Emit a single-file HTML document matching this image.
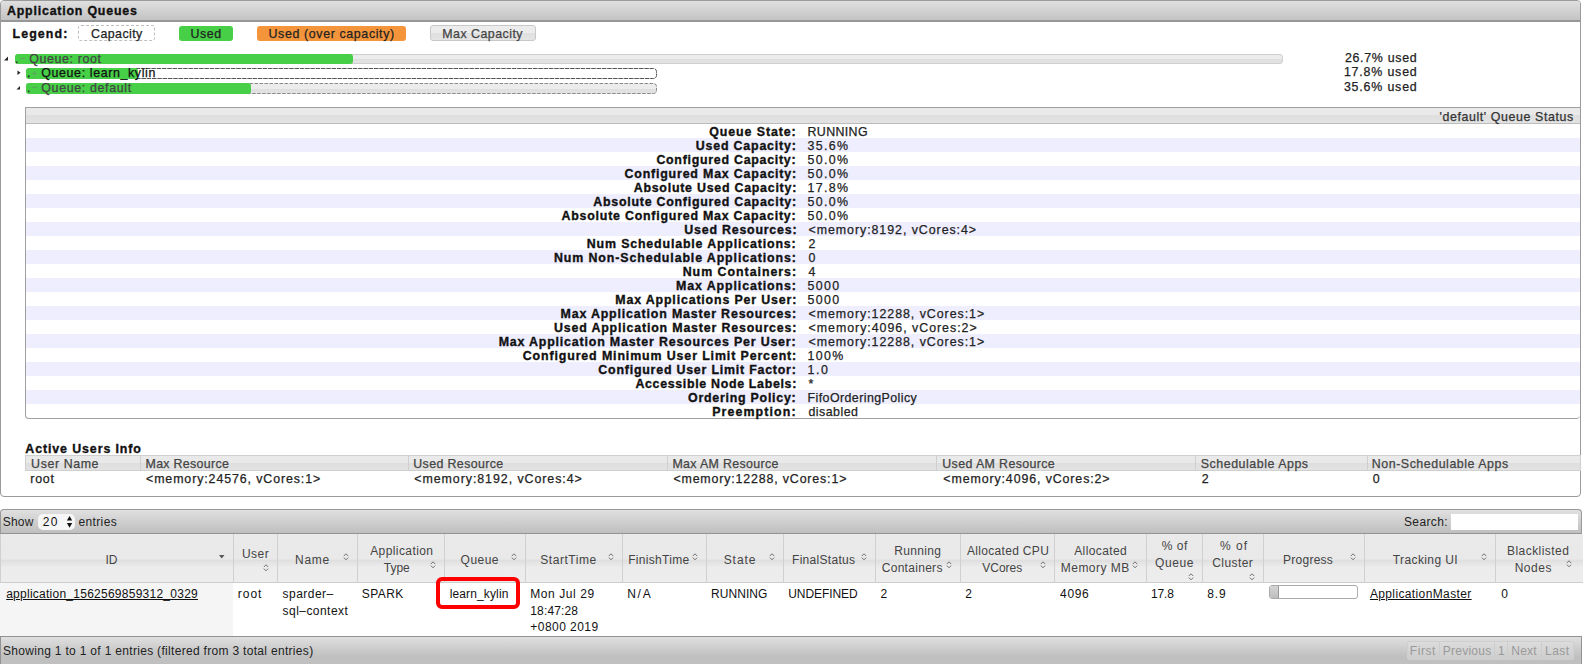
<!DOCTYPE html><html><head><meta charset="utf-8"><style>
*{box-sizing:border-box;margin:0;padding:0}
html,body{width:1583px;height:664px;overflow:hidden;background:#fff}
body{font-family:"Liberation Sans",sans-serif;font-size:12px;color:#222;position:relative}
.a{position:absolute;white-space:nowrap}
#p1{position:absolute;left:0;top:0;width:1581px;height:497px;border:1px solid #9a9a9a;border-radius:4px;overflow:hidden}
#h1{position:absolute;left:0;top:0;width:100%;height:21px;background:linear-gradient(#e0e0e0,#c3c3c3);border-bottom:2px solid #979797}
.leg{position:absolute;top:25px;height:16px;border-radius:3px}
.qst{position:absolute;left:25px;top:107px;width:1555px;height:312px;border:1px solid #a0a0a0;border-right:0;border-radius:0 0 4px 4px;overflow:hidden}
.qsh{position:absolute;left:0;top:0;width:100%;height:16px;background:linear-gradient(#e9e9e9 0,#e9e9e9 50%,#dedede 50%,#e3e3e3 100%);border-bottom:1px solid #bcbcbc}
.row{position:absolute;left:0;width:100%;height:14px}
.o{background:#eeeeff}
.ut{position:absolute;left:25px;top:455px;width:1556px;height:16px;background:linear-gradient(#e9e9e9 0,#e9e9e9 50%,#dedede 50%,#e3e3e3 100%);border:1px solid #cfcfcf}
.ud{position:absolute;top:0;height:14px;border-left:1px solid #cfcfcf}
#p2{position:absolute;left:0;top:509px;width:1582px;height:160px;}
.tb{position:absolute;left:0;top:0;width:1582px;height:25px;border:1px solid #999;border-bottom-color:#939393;border-radius:4px 4px 0 0;background:linear-gradient(#e0e0e0,#bfbfbf)}
.th{position:absolute;top:25px;height:49px;background:linear-gradient(#eaeaea 0,#e9e9e9 52%,#dfdfdf 55%,#e6e6e6 62%,#ececec 70%,#ededed 100%);border-left:1px solid #d0d0d0;border-bottom:1px solid #cdcdcd}
.ft{position:absolute;left:0;top:127px;width:1582px;height:30px;border:1px solid #939393;background:linear-gradient(#dfdfdf,#c0c0c0 70%,#c0c0c0)}
</style></head><body><div id="p1"><div id="h1"></div></div><span class="a" style="top:5px;font-size:12.4px;line-height:12.4px;color:#111;font-weight:bold;-webkit-text-stroke:0.35px #111;letter-spacing:0.794px;left:7px;">Application Queues</span><span class="a" style="top:28px;font-size:12.4px;line-height:12.4px;color:#111;font-weight:bold;-webkit-text-stroke:0.35px #111;letter-spacing:1.083px;left:12.6px;">Legend:</span><div class="leg" style="left:78px;width:77px;border:1px dashed #bfbfbf"></div><span class="a" style="top:28px;font-size:12.4px;line-height:12.4px;color:#222;-webkit-text-stroke:0.25px #222;letter-spacing:0.429px;left:91.1px;">Capacity</span><div class="leg" style="left:179px;top:26px;height:15px;width:54px;background:#47cf48"></div><span class="a" style="top:28px;font-size:12.4px;line-height:12.4px;color:#222;-webkit-text-stroke:0.25px #222;letter-spacing:0.567px;left:190.5px;">Used</span><div class="leg" style="left:257px;top:26px;height:15px;width:149px;background:#f5953b"></div><span class="a" style="top:28px;font-size:12.4px;line-height:12.4px;color:#222;-webkit-text-stroke:0.25px #222;letter-spacing:0.632px;left:268.5px;">Used (over capacity)</span><div class="leg" style="left:430px;width:106px;background:linear-gradient(#ececec 0,#ececec 50%,#e0e0e0 50%,#e4e4e4);border:1px solid #c8c8c8"></div><span class="a" style="top:28px;font-size:12.4px;line-height:12.4px;color:#444;-webkit-text-stroke:0.25px #444;letter-spacing:0.473px;left:442.3px;">Max Capacity</span><div class="a" style="left:15px;top:54px;width:1268px;height:10px;border-radius:3px;background:linear-gradient(#ececec 0,#ececec 50%,#dedede 50%,#e4e4e4);border:1px solid #cfcfcf;"></div><div class="a" style="left:15px;top:54px;width:338px;height:10px;border-radius:3px;background:#47cf48;"></div><div class="a" style="left:26px;top:83px;width:631px;height:11px;border-radius:3px;background:linear-gradient(#ececec 0,#ececec 50%,#dedede 50%,#e4e4e4)"></div><svg class="a" style="left:26px;top:68px" width="632" height="27"><rect x="0.5" y="0.5" width="630" height="10" rx="3" fill="#fff" stroke="#555" stroke-dasharray="4.5 0.8"/><rect x="0.5" y="15.5" width="630" height="10" rx="3" fill="none" stroke="#8a8a8a" stroke-dasharray="3.5 1.5"/></svg><div class="a" style="left:26px;top:68px;width:112px;height:11px;border-radius:3px;background:#47cf48;"></div><div class="a" style="left:26px;top:83px;width:225px;height:11px;border-radius:3px;background:#47cf48;"></div><svg class="a" style="left:0;top:50px" width="30" height="45"><path d="M4 10.5 L8 6.5 L8 10.5 Z" fill="#222"/><path d="M17.5 20.5 L20.5 22.8 L17.5 25 Z" fill="#222"/><path d="M16.5 39.5 L20 36 L20 39.5 Z" fill="#222"/></svg><span class="a" style="top:53px;font-size:12.4px;line-height:12.4px;color:#333;-webkit-text-stroke:0.25px #333;left:15px;">.</span><div class="a" style="left:20px;top:58px;width:5px;height:1px;background:#5aa65a"></div><span class="a" style="top:53px;font-size:12.4px;line-height:12.4px;color:#444;-webkit-text-stroke:0.25px #444;letter-spacing:0.63px;left:29.2px;">Queue: root</span><span class="a" style="top:67px;font-size:12.4px;line-height:12.4px;color:#111;-webkit-text-stroke:0.25px #111;left:27px;">.</span><div class="a" style="left:31.5px;top:73px;width:5px;height:1px;background:#5aa65a"></div><div class="a" style="left:33.5px;top:71px;width:1px;height:5px;background:#5aa65a"></div><span class="a" style="top:67px;font-size:12.4px;line-height:12.4px;color:#111;-webkit-text-stroke:0.25px #111;letter-spacing:0.629px;left:41.3px;">Queue: learn_kylin</span><span class="a" style="top:82px;font-size:12.4px;line-height:12.4px;color:#333;-webkit-text-stroke:0.25px #333;left:27px;">.</span><div class="a" style="left:32px;top:87px;width:5px;height:1px;background:#5aa65a"></div><span class="a" style="top:82px;font-size:12.4px;line-height:12.4px;color:#444;-webkit-text-stroke:0.25px #444;letter-spacing:0.654px;left:41.3px;">Queue: default</span><span class="a" style="top:52px;font-size:12.4px;line-height:12.4px;color:#222;-webkit-text-stroke:0.25px #222;letter-spacing:0.711px;left:1344.9px;">26.7% used</span><span class="a" style="top:66px;font-size:12.4px;line-height:12.4px;color:#222;-webkit-text-stroke:0.25px #222;letter-spacing:0.822px;left:1343.9px;">17.8% used</span><span class="a" style="top:81px;font-size:12.4px;line-height:12.4px;color:#222;-webkit-text-stroke:0.25px #222;letter-spacing:0.822px;left:1343.9px;">35.6% used</span><div class="qst"><div class="qsh"></div><div class="row" style="top:16px"></div><div class="row o" style="top:30px"></div><div class="row" style="top:44px"></div><div class="row o" style="top:58px"></div><div class="row" style="top:72px"></div><div class="row o" style="top:86px"></div><div class="row" style="top:100px"></div><div class="row o" style="top:114px"></div><div class="row" style="top:128px"></div><div class="row o" style="top:142px"></div><div class="row" style="top:156px"></div><div class="row o" style="top:170px"></div><div class="row" style="top:184px"></div><div class="row o" style="top:198px"></div><div class="row" style="top:212px"></div><div class="row o" style="top:226px"></div><div class="row" style="top:240px"></div><div class="row o" style="top:254px"></div><div class="row" style="top:268px"></div><div class="row o" style="top:282px"></div><div class="row" style="top:296px"></div></div><span class="a" style="top:111px;font-size:12.4px;line-height:12.4px;color:#333;-webkit-text-stroke:0.25px #333;letter-spacing:0.595px;left:1439.5px;">&#x27;default&#x27; Queue Status</span><span class="a" style="top:126px;font-size:12.4px;line-height:12.4px;color:#111;font-weight:bold;-webkit-text-stroke:0.35px #111;letter-spacing:0.918px;left:709.2px;">Queue State:</span><span class="a" style="top:126px;font-size:12.4px;line-height:12.4px;color:#222;-webkit-text-stroke:0.25px #222;letter-spacing:0.367px;left:807.5px;">RUNNING</span><span class="a" style="top:140px;font-size:12.4px;line-height:12.4px;color:#111;font-weight:bold;-webkit-text-stroke:0.35px #111;letter-spacing:0.808px;left:695.8px;">Used Capacity:</span><span class="a" style="top:140px;font-size:12.4px;line-height:12.4px;color:#222;-webkit-text-stroke:0.25px #222;letter-spacing:1.375px;left:807.5px;">35.6%</span><span class="a" style="top:154px;font-size:12.4px;line-height:12.4px;color:#111;font-weight:bold;-webkit-text-stroke:0.35px #111;letter-spacing:0.732px;left:656.4px;">Configured Capacity:</span><span class="a" style="top:154px;font-size:12.4px;line-height:12.4px;color:#222;-webkit-text-stroke:0.25px #222;letter-spacing:1.375px;left:807.5px;">50.0%</span><span class="a" style="top:168px;font-size:12.4px;line-height:12.4px;color:#111;font-weight:bold;-webkit-text-stroke:0.35px #111;letter-spacing:0.817px;left:624.5px;">Configured Max Capacity:</span><span class="a" style="top:168px;font-size:12.4px;line-height:12.4px;color:#222;-webkit-text-stroke:0.25px #222;letter-spacing:1.375px;left:807.5px;">50.0%</span><span class="a" style="top:182px;font-size:12.4px;line-height:12.4px;color:#111;font-weight:bold;-webkit-text-stroke:0.35px #111;letter-spacing:0.755px;left:633.7px;">Absolute Used Capacity:</span><span class="a" style="top:182px;font-size:12.4px;line-height:12.4px;color:#222;-webkit-text-stroke:0.25px #222;letter-spacing:1.375px;left:807.5px;">17.8%</span><span class="a" style="top:196px;font-size:12.4px;line-height:12.4px;color:#111;font-weight:bold;-webkit-text-stroke:0.35px #111;letter-spacing:0.75px;left:593.3px;">Absolute Configured Capacity:</span><span class="a" style="top:196px;font-size:12.4px;line-height:12.4px;color:#222;-webkit-text-stroke:0.25px #222;letter-spacing:1.375px;left:807.5px;">50.0%</span><span class="a" style="top:210px;font-size:12.4px;line-height:12.4px;color:#111;font-weight:bold;-webkit-text-stroke:0.35px #111;letter-spacing:0.775px;left:561.5px;">Absolute Configured Max Capacity:</span><span class="a" style="top:210px;font-size:12.4px;line-height:12.4px;color:#222;-webkit-text-stroke:0.25px #222;letter-spacing:1.375px;left:807.5px;">50.0%</span><span class="a" style="top:224px;font-size:12.4px;line-height:12.4px;color:#111;font-weight:bold;-webkit-text-stroke:0.35px #111;letter-spacing:0.786px;left:684.3px;">Used Resources:</span><span class="a" style="top:224px;font-size:12.4px;line-height:12.4px;color:#222;-webkit-text-stroke:0.25px #222;letter-spacing:0.95px;left:808.5px;">&lt;memory:8192, vCores:4&gt;</span><span class="a" style="top:238px;font-size:12.4px;line-height:12.4px;color:#111;font-weight:bold;-webkit-text-stroke:0.35px #111;letter-spacing:0.839px;left:586.8px;">Num Schedulable Applications:</span><span class="a" style="top:238px;font-size:12.4px;line-height:12.4px;color:#222;-webkit-text-stroke:0.25px #222;left:808.5px;">2</span><span class="a" style="top:252px;font-size:12.4px;line-height:12.4px;color:#111;font-weight:bold;-webkit-text-stroke:0.35px #111;letter-spacing:0.884px;left:554.0px;">Num Non-Schedulable Applications:</span><span class="a" style="top:252px;font-size:12.4px;line-height:12.4px;color:#222;-webkit-text-stroke:0.25px #222;left:808.5px;">0</span><span class="a" style="top:266px;font-size:12.4px;line-height:12.4px;color:#111;font-weight:bold;-webkit-text-stroke:0.35px #111;letter-spacing:0.971px;left:682.7px;">Num Containers:</span><span class="a" style="top:266px;font-size:12.4px;line-height:12.4px;color:#222;-webkit-text-stroke:0.25px #222;left:808.5px;">4</span><span class="a" style="top:280px;font-size:12.4px;line-height:12.4px;color:#111;font-weight:bold;-webkit-text-stroke:0.35px #111;letter-spacing:0.887px;left:676.1px;">Max Applications:</span><span class="a" style="top:280px;font-size:12.4px;line-height:12.4px;color:#222;-webkit-text-stroke:0.25px #222;letter-spacing:1.4px;left:807.5px;">5000</span><span class="a" style="top:294px;font-size:12.4px;line-height:12.4px;color:#111;font-weight:bold;-webkit-text-stroke:0.35px #111;letter-spacing:0.84px;left:615.3px;">Max Applications Per User:</span><span class="a" style="top:294px;font-size:12.4px;line-height:12.4px;color:#222;-webkit-text-stroke:0.25px #222;letter-spacing:1.4px;left:807.5px;">5000</span><span class="a" style="top:308px;font-size:12.4px;line-height:12.4px;color:#111;font-weight:bold;-webkit-text-stroke:0.35px #111;letter-spacing:0.837px;left:560.5px;">Max Application Master Resources:</span><span class="a" style="top:308px;font-size:12.4px;line-height:12.4px;color:#222;-webkit-text-stroke:0.25px #222;letter-spacing:0.961px;left:808.5px;">&lt;memory:12288, vCores:1&gt;</span><span class="a" style="top:322px;font-size:12.4px;line-height:12.4px;color:#111;font-weight:bold;-webkit-text-stroke:0.35px #111;letter-spacing:0.827px;left:554.0px;">Used Application Master Resources:</span><span class="a" style="top:322px;font-size:12.4px;line-height:12.4px;color:#222;-webkit-text-stroke:0.25px #222;letter-spacing:0.977px;left:808.5px;">&lt;memory:4096, vCores:2&gt;</span><span class="a" style="top:336px;font-size:12.4px;line-height:12.4px;color:#111;font-weight:bold;-webkit-text-stroke:0.35px #111;letter-spacing:0.82px;left:498.7px;">Max Application Master Resources Per User:</span><span class="a" style="top:336px;font-size:12.4px;line-height:12.4px;color:#222;-webkit-text-stroke:0.25px #222;letter-spacing:0.961px;left:808.5px;">&lt;memory:12288, vCores:1&gt;</span><span class="a" style="top:350px;font-size:12.4px;line-height:12.4px;color:#111;font-weight:bold;-webkit-text-stroke:0.35px #111;letter-spacing:0.881px;left:522.7px;">Configured Minimum User Limit Percent:</span><span class="a" style="top:350px;font-size:12.4px;line-height:12.4px;color:#222;-webkit-text-stroke:0.25px #222;letter-spacing:1.4px;left:807.5px;">100%</span><span class="a" style="top:364px;font-size:12.4px;line-height:12.4px;color:#111;font-weight:bold;-webkit-text-stroke:0.35px #111;letter-spacing:0.786px;left:598.3px;">Configured User Limit Factor:</span><span class="a" style="top:364px;font-size:12.4px;line-height:12.4px;color:#222;-webkit-text-stroke:0.25px #222;letter-spacing:1.55px;left:807.5px;">1.0</span><span class="a" style="top:378px;font-size:12.4px;line-height:12.4px;color:#111;font-weight:bold;-webkit-text-stroke:0.35px #111;letter-spacing:0.677px;left:635.4px;">Accessible Node Labels:</span><span class="a" style="top:378px;font-size:12.4px;line-height:12.4px;color:#222;-webkit-text-stroke:0.25px #222;left:808.5px;">*</span><span class="a" style="top:392px;font-size:12.4px;line-height:12.4px;color:#111;font-weight:bold;-webkit-text-stroke:0.35px #111;letter-spacing:0.753px;left:688.0px;">Ordering Policy:</span><span class="a" style="top:392px;font-size:12.4px;line-height:12.4px;color:#222;-webkit-text-stroke:0.25px #222;letter-spacing:0.435px;left:807.5px;">FifoOrderingPolicy</span><span class="a" style="top:406px;font-size:12.4px;line-height:12.4px;color:#111;font-weight:bold;-webkit-text-stroke:0.35px #111;letter-spacing:1.11px;left:712.2px;">Preemption:</span><span class="a" style="top:406px;font-size:12.4px;line-height:12.4px;color:#222;-webkit-text-stroke:0.25px #222;letter-spacing:0.471px;left:808.5px;">disabled</span><span class="a" style="top:443px;font-size:12.4px;line-height:12.4px;color:#111;font-weight:bold;-webkit-text-stroke:0.35px #111;letter-spacing:0.9px;left:25.3px;">Active Users Info</span><div class="ut"><div class="ud" style="left:113.5px"></div><div class="ud" style="left:382.3px"></div><div class="ud" style="left:640.5px"></div><div class="ud" style="left:910.3px"></div><div class="ud" style="left:1169px"></div><div class="ud" style="left:1340.6px"></div></div><span class="a" style="top:458px;font-size:12.4px;line-height:12.4px;color:#444;-webkit-text-stroke:0.25px #444;letter-spacing:0.588px;left:31.1px;">User Name</span><span class="a" style="top:458px;font-size:12.4px;line-height:12.4px;color:#444;-webkit-text-stroke:0.25px #444;letter-spacing:0.309px;left:145.5px;">Max Resource</span><span class="a" style="top:458px;font-size:12.4px;line-height:12.4px;color:#444;-webkit-text-stroke:0.25px #444;letter-spacing:0.375px;left:413.3px;">Used Resource</span><span class="a" style="top:458px;font-size:12.4px;line-height:12.4px;color:#444;-webkit-text-stroke:0.25px #444;letter-spacing:0.35px;left:672.4px;">Max AM Resource</span><span class="a" style="top:458px;font-size:12.4px;line-height:12.4px;color:#444;-webkit-text-stroke:0.25px #444;letter-spacing:0.38px;left:942.3px;">Used AM Resource</span><span class="a" style="top:458px;font-size:12.4px;line-height:12.4px;color:#444;-webkit-text-stroke:0.25px #444;letter-spacing:0.533px;left:1200.8px;">Schedulable Apps</span><span class="a" style="top:458px;font-size:12.4px;line-height:12.4px;color:#444;-webkit-text-stroke:0.25px #444;letter-spacing:0.542px;left:1371.8px;">Non-Schedulable Apps</span><span class="a" style="top:473px;font-size:12.4px;line-height:12.4px;color:#222;-webkit-text-stroke:0.25px #222;letter-spacing:0.767px;left:30.3px;">root</span><span class="a" style="top:473px;font-size:12.4px;line-height:12.4px;color:#222;-webkit-text-stroke:0.25px #222;letter-spacing:0.896px;left:146px;">&lt;memory:24576, vCores:1&gt;</span><span class="a" style="top:473px;font-size:12.4px;line-height:12.4px;color:#222;-webkit-text-stroke:0.25px #222;letter-spacing:0.945px;left:414.3px;">&lt;memory:8192, vCores:4&gt;</span><span class="a" style="top:473px;font-size:12.4px;line-height:12.4px;color:#222;-webkit-text-stroke:0.25px #222;letter-spacing:0.843px;left:673.4px;">&lt;memory:12288, vCores:1&gt;</span><span class="a" style="top:473px;font-size:12.4px;line-height:12.4px;color:#222;-webkit-text-stroke:0.25px #222;letter-spacing:0.891px;left:943.3px;">&lt;memory:4096, vCores:2&gt;</span><span class="a" style="top:473px;font-size:12.4px;line-height:12.4px;color:#222;-webkit-text-stroke:0.25px #222;left:1201.8px;">2</span><span class="a" style="top:473px;font-size:12.4px;line-height:12.4px;color:#222;-webkit-text-stroke:0.25px #222;left:1372.8px;">0</span><div id="p2"><div class="tb"></div><div class="th" style="left:0px;width:234px"></div><div class="th" style="left:233px;width:45px"></div><div class="th" style="left:277px;width:81px"></div><div class="th" style="left:357px;width:88px"></div><div class="th" style="left:444px;width:82px"></div><div class="th" style="left:525px;width:98px"></div><div class="th" style="left:622px;width:85px"></div><div class="th" style="left:706px;width:78px"></div><div class="th" style="left:783px;width:93px"></div><div class="th" style="left:875px;width:86px"></div><div class="th" style="left:960px;width:95px"></div><div class="th" style="left:1054px;width:93px"></div><div class="th" style="left:1146px;width:57px"></div><div class="th" style="left:1202px;width:62px"></div><div class="th" style="left:1263px;width:102px"></div><div class="th" style="left:1364px;width:132px"></div><div class="th" style="left:1495px;width:88px"></div><div class="a" style="left:0;top:74px;width:233px;height:53px;background:#f5f5f5"></div><div class="ft"></div></div><span class="a" style="top:516px;font-size:12px;line-height:12px;color:#222;letter-spacing:0.2px;left:2.8px;">Show</span><div class="a" style="left:38px;top:514px;width:37px;height:16px;border-radius:5px;background:#f6f6f6"></div><span class="a" style="top:516px;font-size:12px;line-height:12px;color:#111;letter-spacing:1.5px;left:42.7px;">20</span><svg class="a" style="left:66px;top:515px" width="8" height="14"><path d="M0.9 5.6 L3.55 1 L6.2 5.6 Z M0.9 8 L3.55 12.8 L6.2 8 Z" fill="#111"/></svg><span class="a" style="top:516px;font-size:12px;line-height:12px;color:#222;letter-spacing:0.383px;left:78.4px;">entries</span><span class="a" style="top:516px;font-size:12px;line-height:12px;color:#222;letter-spacing:0.367px;left:1404.0px;">Search:</span><div class="a" style="left:1451px;top:514px;width:127px;height:16px;background:#fff"></div><span class="a" style="top:554px;font-size:12px;line-height:12px;color:#444;left:105.4px;">ID</span><span class="a" style="top:548px;font-size:12px;line-height:12px;color:#444;letter-spacing:0.433px;left:242px;">User</span><span class="a" style="top:554px;font-size:12px;line-height:12px;color:#444;letter-spacing:0.7px;left:295.1px;">Name</span><span class="a" style="top:545px;font-size:12px;line-height:12px;color:#444;letter-spacing:0.41px;left:370.2px;">Application</span><span class="a" style="top:562px;font-size:12px;line-height:12px;color:#444;letter-spacing:-0.033px;left:383.8px;">Type</span><span class="a" style="top:554px;font-size:12px;line-height:12px;color:#444;letter-spacing:0.45px;left:460.6px;">Queue</span><span class="a" style="top:554px;font-size:12px;line-height:12px;color:#444;letter-spacing:0.562px;left:540.2px;">StartTime</span><span class="a" style="top:554px;font-size:12px;line-height:12px;color:#444;letter-spacing:0.3px;left:628.2px;">FinishTime</span><span class="a" style="top:554px;font-size:12px;line-height:12px;color:#444;letter-spacing:0.925px;left:723.7px;">State</span><span class="a" style="top:554px;font-size:12px;line-height:12px;color:#444;letter-spacing:0.3px;left:792px;">FinalStatus</span><span class="a" style="top:545px;font-size:12px;line-height:12px;color:#444;letter-spacing:0.333px;left:894.3px;">Running</span><span class="a" style="top:562px;font-size:12px;line-height:12px;color:#444;letter-spacing:0.3px;left:881.7px;">Containers</span><span class="a" style="top:545px;font-size:12px;line-height:12px;color:#444;letter-spacing:0.317px;left:967px;">Allocated CPU</span><span class="a" style="top:562px;font-size:12px;line-height:12px;color:#444;letter-spacing:-0.02px;left:982.3px;">VCores</span><span class="a" style="top:545px;font-size:12px;line-height:12px;color:#444;letter-spacing:0.4px;left:1074.2px;">Allocated</span><span class="a" style="top:562px;font-size:12px;line-height:12px;color:#444;letter-spacing:0.463px;left:1060.8px;">Memory MB</span><span class="a" style="top:540px;font-size:12px;line-height:12px;color:#444;letter-spacing:0.567px;left:1161.7px;">% of</span><span class="a" style="top:557px;font-size:12px;line-height:12px;color:#444;letter-spacing:0.6px;left:1155px;">Queue</span><span class="a" style="top:540px;font-size:12px;line-height:12px;color:#444;letter-spacing:1.0px;left:1220px;">% of</span><span class="a" style="top:557px;font-size:12px;line-height:12px;color:#444;letter-spacing:0.4px;left:1212.3px;">Cluster</span><span class="a" style="top:554px;font-size:12px;line-height:12px;color:#444;letter-spacing:0.257px;left:1283px;">Progress</span><span class="a" style="top:554px;font-size:12px;line-height:12px;color:#444;letter-spacing:0.39px;left:1392.8px;">Tracking UI</span><span class="a" style="top:545px;font-size:12px;line-height:12px;color:#444;letter-spacing:0.45px;left:1507px;">Blacklisted</span><span class="a" style="top:562px;font-size:12px;line-height:12px;color:#444;letter-spacing:0.5px;left:1514.7px;">Nodes</span><svg class="a" style="left:262.5px;top:564px" width="7" height="8"><path d="M0.8 3 L3 0.8 L5.2 3 M0.8 4.6 L3 6.8 L5.2 4.6" fill="none" stroke="#6a6a6a" stroke-width="0.95"/></svg><svg class="a" style="left:342.5px;top:552.5px" width="7" height="8"><path d="M0.8 3 L3 0.8 L5.2 3 M0.8 4.6 L3 6.8 L5.2 4.6" fill="none" stroke="#6a6a6a" stroke-width="0.95"/></svg><svg class="a" style="left:429.5px;top:560.7px" width="7" height="8"><path d="M0.8 3 L3 0.8 L5.2 3 M0.8 4.6 L3 6.8 L5.2 4.6" fill="none" stroke="#6a6a6a" stroke-width="0.95"/></svg><svg class="a" style="left:510.5px;top:553px" width="7" height="8"><path d="M0.8 3 L3 0.8 L5.2 3 M0.8 4.6 L3 6.8 L5.2 4.6" fill="none" stroke="#6a6a6a" stroke-width="0.95"/></svg><svg class="a" style="left:607.5px;top:553px" width="7" height="8"><path d="M0.8 3 L3 0.8 L5.2 3 M0.8 4.6 L3 6.8 L5.2 4.6" fill="none" stroke="#6a6a6a" stroke-width="0.95"/></svg><svg class="a" style="left:692.0px;top:552.7px" width="7" height="8"><path d="M0.8 3 L3 0.8 L5.2 3 M0.8 4.6 L3 6.8 L5.2 4.6" fill="none" stroke="#6a6a6a" stroke-width="0.95"/></svg><svg class="a" style="left:768.7px;top:553px" width="7" height="8"><path d="M0.8 3 L3 0.8 L5.2 3 M0.8 4.6 L3 6.8 L5.2 4.6" fill="none" stroke="#6a6a6a" stroke-width="0.95"/></svg><svg class="a" style="left:860.5px;top:553px" width="7" height="8"><path d="M0.8 3 L3 0.8 L5.2 3 M0.8 4.6 L3 6.8 L5.2 4.6" fill="none" stroke="#6a6a6a" stroke-width="0.95"/></svg><svg class="a" style="left:945.5px;top:561.3px" width="7" height="8"><path d="M0.8 3 L3 0.8 L5.2 3 M0.8 4.6 L3 6.8 L5.2 4.6" fill="none" stroke="#6a6a6a" stroke-width="0.95"/></svg><svg class="a" style="left:1039.5px;top:561px" width="7" height="8"><path d="M0.8 3 L3 0.8 L5.2 3 M0.8 4.6 L3 6.8 L5.2 4.6" fill="none" stroke="#6a6a6a" stroke-width="0.95"/></svg><svg class="a" style="left:1131.5px;top:561px" width="7" height="8"><path d="M0.8 3 L3 0.8 L5.2 3 M0.8 4.6 L3 6.8 L5.2 4.6" fill="none" stroke="#6a6a6a" stroke-width="0.95"/></svg><svg class="a" style="left:1187.9px;top:573px" width="7" height="8"><path d="M0.8 3 L3 0.8 L5.2 3 M0.8 4.6 L3 6.8 L5.2 4.6" fill="none" stroke="#6a6a6a" stroke-width="0.95"/></svg><svg class="a" style="left:1248.6px;top:572.7px" width="7" height="8"><path d="M0.8 3 L3 0.8 L5.2 3 M0.8 4.6 L3 6.8 L5.2 4.6" fill="none" stroke="#6a6a6a" stroke-width="0.95"/></svg><svg class="a" style="left:1349.6px;top:552.8px" width="7" height="8"><path d="M0.8 3 L3 0.8 L5.2 3 M0.8 4.6 L3 6.8 L5.2 4.6" fill="none" stroke="#6a6a6a" stroke-width="0.95"/></svg><svg class="a" style="left:1480.5px;top:553px" width="7" height="8"><path d="M0.8 3 L3 0.8 L5.2 3 M0.8 4.6 L3 6.8 L5.2 4.6" fill="none" stroke="#6a6a6a" stroke-width="0.95"/></svg><svg class="a" style="left:1566.4px;top:560.3px" width="7" height="8"><path d="M0.8 3 L3 0.8 L5.2 3 M0.8 4.6 L3 6.8 L5.2 4.6" fill="none" stroke="#6a6a6a" stroke-width="0.95"/></svg><svg class="a" style="left:219px;top:554.5px" width="6" height="4"><path d="M0 0 L5.5 0 L2.75 3.5 Z" fill="#555"/></svg><span class="a" style="top:588px;font-size:12px;line-height:12px;color:#111;letter-spacing:0.255px;left:6.2px;text-decoration:underline;">application_1562569859312_0329</span><span class="a" style="top:588px;font-size:12px;line-height:12px;color:#111;letter-spacing:0.967px;left:237.8px;">root</span><span class="a" style="top:588px;font-size:12px;line-height:12px;color:#111;letter-spacing:0.457px;left:282.6px;">sparder–</span><span class="a" style="top:605px;font-size:12px;line-height:12px;color:#111;letter-spacing:0.45px;left:282.6px;">sql–context</span><span class="a" style="top:588px;font-size:12px;line-height:12px;color:#111;letter-spacing:0.475px;left:361.7px;">SPARK</span><span class="a" style="top:588px;font-size:12px;line-height:12px;color:#111;letter-spacing:0.13px;left:449.7px;">learn_kylin</span><span class="a" style="top:588px;font-size:12px;line-height:12px;color:#111;letter-spacing:0.567px;left:530.3px;">Mon Jul 29</span><span class="a" style="top:605px;font-size:12px;line-height:12px;color:#111;letter-spacing:0.143px;left:530.3px;">18:47:28</span><span class="a" style="top:621px;font-size:12px;line-height:12px;color:#111;letter-spacing:0.456px;left:530.3px;">+0800 2019</span><span class="a" style="top:588px;font-size:12px;line-height:12px;color:#111;letter-spacing:1.75px;left:627.2px;">N/A</span><span class="a" style="top:588px;font-size:12px;line-height:12px;color:#111;letter-spacing:0.033px;left:711.1px;">RUNNING</span><span class="a" style="top:588px;font-size:12px;line-height:12px;color:#111;letter-spacing:-0.062px;left:788.2px;">UNDEFINED</span><span class="a" style="top:588px;font-size:12px;line-height:12px;color:#111;left:880.6px;">2</span><span class="a" style="top:588px;font-size:12px;line-height:12px;color:#111;left:965.3px;">2</span><span class="a" style="top:588px;font-size:12px;line-height:12px;color:#111;letter-spacing:0.633px;left:1060.1px;">4096</span><span class="a" style="top:588px;font-size:12px;line-height:12px;color:#111;letter-spacing:-0.133px;left:1151px;">17.8</span><span class="a" style="top:588px;font-size:12px;line-height:12px;color:#111;letter-spacing:0.9px;left:1207.2px;">8.9</span><div class="a" style="left:1269px;top:585px;width:89px;height:14px;border:1px solid #aaa;border-radius:3px;background:#fff"></div><div class="a" style="left:1270px;top:586px;width:9px;height:12px;background:linear-gradient(#d5d5d5,#bdbdbd);border-right:1px solid #999;border-radius:2px 0 0 2px"></div><span class="a" style="top:588px;font-size:12px;line-height:12px;color:#111;letter-spacing:0.375px;left:1369.9px;text-decoration:underline;">ApplicationMaster</span><span class="a" style="top:588px;font-size:12px;line-height:12px;color:#111;left:1501.2px;">0</span><div class="a" style="left:436px;top:577px;width:84px;height:32px;border:4px solid #ff0000;border-radius:6px"></div><span class="a" style="top:645px;font-size:12px;line-height:12px;color:#222;letter-spacing:0.31px;left:3px;">Showing 1 to 1 of 1 entries (filtered from 3 total entries)</span><div class="a" style="left:1407px;top:641px;width:167px;height:19px;border:1px solid #cfcfcf;border-radius:2px;background:linear-gradient(#dcdcdc,#cdcdcd)"></div><span class="a" style="top:645px;font-size:12px;line-height:12px;color:#9a9a9a;letter-spacing:0.55px;left:1409.8px;">First</span><span class="a" style="top:645px;font-size:12px;line-height:12px;color:#9a9a9a;letter-spacing:0.257px;left:1442.7px;">Previous</span><span class="a" style="top:645px;font-size:12px;line-height:12px;color:#9a9a9a;left:1498px;">1</span><span class="a" style="top:645px;font-size:12px;line-height:12px;color:#9a9a9a;letter-spacing:0.233px;left:1511.3px;">Next</span><span class="a" style="top:645px;font-size:12px;line-height:12px;color:#9a9a9a;letter-spacing:0.467px;left:1545px;">Last</span><div class="a" style="left:1439px;top:642px;width:1px;height:17px;background:#cdcdcd"></div><div class="a" style="left:1494px;top:642px;width:1px;height:17px;background:#cdcdcd"></div><div class="a" style="left:1507px;top:642px;width:1px;height:17px;background:#cdcdcd"></div><div class="a" style="left:1541px;top:642px;width:1px;height:17px;background:#cdcdcd"></div></body></html>
